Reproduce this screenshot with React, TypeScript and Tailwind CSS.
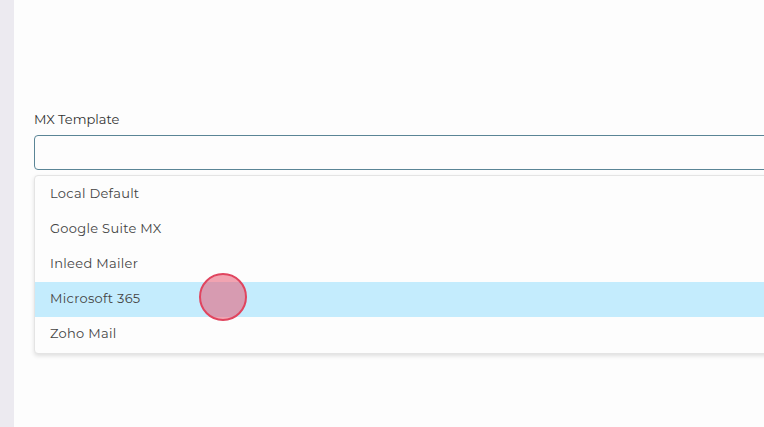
import React from "react";

const options = [
  "Local Default",
  "Google Suite MX",
  "Inleed Mailer",
  "Microsoft 365",
  "Zoho Mail",
];

export default function App() {
  return (
    <div
      className="flex h-[427px] w-[764px] overflow-hidden bg-[#eceaf0]"
      style={{ fontFamily: "Montserrat, 'Open Sans', 'Noto Sans', sans-serif" }}
    >
      <div className="w-[14px] shrink-0" />
      <main className="relative flex-1 bg-[#fdfdfd] pl-[20px] pt-[111px]">
        <label className="block text-[13px] leading-[16px] text-[#333]">
          MX Template
        </label>
        <div className="mt-[8px] h-[35px] w-[760px] rounded-[4px] border border-[#5a8596] bg-[#fdfdfd]" />
        <ul className="mt-[5px] w-[760px] rounded-[4px] border border-[#e4e4e4] bg-[#fdfdfd] py-[1px] shadow-[0_2px_4px_rgba(0,0,0,0.12)]">
          {options.map((o) => (
            <li
              key={o}
              className={
                "flex h-[35px] items-center pb-[1px] pl-[15px] text-[13px] tracking-[0.3px] text-[#444] " +
                (o === "Microsoft 365" ? "bg-[#c4ecfd]" : "")
              }
            >
              {o}
            </li>
          ))}
        </ul>
        <div className="absolute left-[185px] top-[273px] h-[48px] w-[48px] rounded-full border-2 border-[#e0455f] bg-[rgba(232,90,115,0.55)]" />
      </main>
    </div>
  );
}
